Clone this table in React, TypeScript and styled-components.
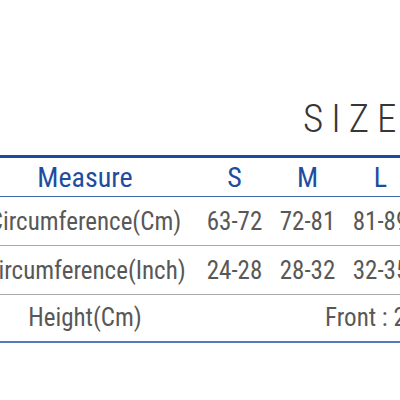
import React from "react";
import styled, { createGlobalStyle } from "styled-components";

const Global = createGlobalStyle`
  html, body { margin: 0; padding: 0; background: #ffffff; }
  body { width: 400px; height: 400px; overflow: hidden; }
`;

const Page = styled.div`
  width: 400px;
  height: 400px;
  overflow: hidden;
  font-family: "Roboto Condensed", "Roboto", sans-serif;
`;

const Title = styled.div`
  padding: 99px 0 16px 303px;
  font-size: 39px;
  line-height: 40px;
  font-weight: 300;
  letter-spacing: 8px;
  color: #363636;
  white-space: nowrap;
`;

const Table = styled.table`
  margin-left: -28px;
  border-collapse: collapse;
  table-layout: fixed;
  width: 518px;
  border-top: 3px solid #1c4c9f;
  border-bottom: 2px solid #5479bd;
`;

const HeadCell = styled.th<{ $w: number }>`
  width: ${(p) => p.$w}px;
  height: 38px;
  padding: 0;
  font-size: 28px;
  font-weight: 400;
  color: #1e4d9e;
  text-align: center;
  border-bottom: 1.5px solid #3f67b0;
  white-space: nowrap;
`;

const Row = styled.tr<{ $h: number; $last?: boolean }>`
  height: ${(p) => p.$h}px;
  border-bottom: ${(p) => (p.$last ? "none" : "1px solid #a8a8a8")};
`;

const Cell = styled.td<{ $pad?: number }>`
  padding: 0 0 0 ${(p) => p.$pad ?? 0}px;
  font-size: 25px;
  color: #585858;
  text-align: ${(p) => (p.$pad ? "left" : "center")};
  white-space: nowrap;
  overflow: hidden;
`;

const sizes = ["S", "M", "L", "XL"];
const rows = [
  { label: "Circumference(Cm)", values: ["63-72", "72-81", "81-89", "89-97"] },
  { label: "Circumference(Inch)", values: ["24-28", "28-32", "32-35", "35-38"] },
];

export default function App() {
  return (
    <Page>
      <Global />
      <Title>SIZE</Title>
      <Table>
        <thead>
          <tr>
            <HeadCell $w={226}>Measure</HeadCell>
            {sizes.map((s) => (
              <HeadCell key={s} $w={73}>
                {s}
              </HeadCell>
            ))}
          </tr>
        </thead>
        <tbody>
          {rows.map((r) => (
            <Row key={r.label} $h={49}>
              <Cell>{r.label}</Cell>
              {r.values.map((v) => (
                <Cell key={v}>{v}</Cell>
              ))}
            </Row>
          ))}
          <Row $h={47} $last>
            <Cell>Height(Cm)</Cell>
            <Cell colSpan={4} $pad={127}>
              Front : 23cm
            </Cell>
          </Row>
        </tbody>
      </Table>
    </Page>
  );
}
